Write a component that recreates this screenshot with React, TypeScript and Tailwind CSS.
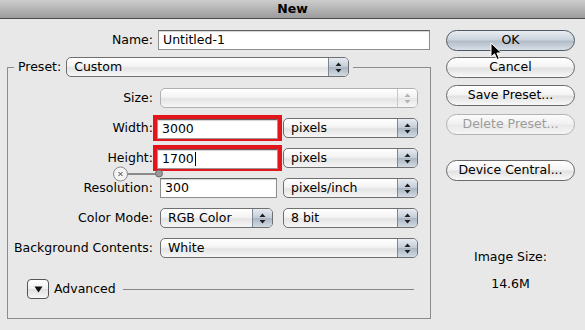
import React from "react";

const FONT = { fontFamily: '"DejaVu Sans", "Liberation Sans", sans-serif' };

function Arrows({ disabled }: { disabled?: boolean }) {
  const c = disabled ? "#b4b4b4" : "#1e1e1e";
  return (
    <svg width="7" height="11" viewBox="0 0 7 11">
      <path d="M3.5 0.5 L6.5 4 L0.5 4 Z" fill={c} />
      <path d="M3.5 10.5 L6.5 7 L0.5 7 Z" fill={c} />
    </svg>
  );
}

function Popup({
  label,
  cls,
  disabled,
}: {
  label: string;
  cls: string;
  disabled?: boolean;
}) {
  return (
    <div
      className={`flex h-[20px] shrink-0 overflow-hidden rounded-[5px] border ${
        disabled ? "border-[#b0b0b0]" : "border-[#6f6f6f]"
      } bg-[linear-gradient(to_bottom,#ffffff_0%,#f4f4f4_45%,#e4e4e4_55%,#f6f6f6_100%)] ${cls}`}
    >
      <div className="flex-1 pl-[7px] text-[12.5px] leading-[18px] text-black">{label}</div>
      <div
        className={`flex w-[20px] items-center justify-center border-l ${
          disabled
            ? "border-[#c8c8c8] bg-[linear-gradient(to_bottom,#ffffff,#f0f0f0_50%,#e6e6e6_51%,#f6f6f6)]"
            : "border-[#7d8793] bg-[linear-gradient(to_bottom,#e6ebf1_0%,#c4cdd8_48%,#aab6c3_52%,#d3dbe4_100%)]"
        }`}
      >
        <Arrows disabled={disabled} />
      </div>
    </div>
  );
}

function Field({ value, cls, caret }: { value: string; cls: string; caret?: boolean }) {
  return (
    <div
      className={`flex h-[20px] shrink-0 items-center border border-[#8e8e8e] border-t-[#5f5f5f] bg-white pl-[4px] text-[12.5px] text-black shadow-[inset_0_1px_1px_rgba(0,0,0,0.18)] ${cls}`}
    >
      {value}
      {caret && <span className="ml-[1px] inline-block h-[14px] w-[1px] bg-black" />}
    </div>
  );
}

function Btn({
  label,
  cls,
  def,
  disabled,
}: {
  label: string;
  cls: string;
  def?: boolean;
  disabled?: boolean;
}) {
  const look = def
    ? "border-[#4f5965] bg-[linear-gradient(to_bottom,#e9edf2_0%,#c9d1db_48%,#b0bbc7_52%,#d8dfe7_100%)] text-black"
    : disabled
    ? "border-[#b3b3b3] bg-[linear-gradient(to_bottom,#fbfbfb_0%,#f1f1f1_48%,#e8e8e8_52%,#f5f5f5_100%)] text-[#9c9c9c]"
    : "border-[#6a6a6a] bg-[linear-gradient(to_bottom,#ffffff_0%,#f3f3f3_48%,#e1e1e1_52%,#f8f8f8_100%)] text-black";
  return (
    <div
      className={`flex h-[21px] w-[129px] items-center justify-center rounded-full border text-[12.5px] ${look} ${cls}`}
    >
      {label}
    </div>
  );
}

function Row({ label, children }: { label: string; children: React.ReactNode }) {
  return (
    <div className="flex h-[20px] items-center">
      <div className="w-[145px] shrink-0 whitespace-nowrap text-right text-[12.5px] text-black">{label}</div>
      <div className="ml-[7px] flex items-center">{children}</div>
    </div>
  );
}

export default function App() {
  return (
    <div className="relative h-[330px] w-[585px] overflow-hidden bg-[#e8e8e8]" style={FONT}>
      {/* Title bar */}
      <div className="flex h-[19px] items-center justify-center border-b border-[#4a4a4a] bg-[linear-gradient(to_bottom,#cdcdcd,#9b9b9b)] text-[12.5px] font-bold text-black">
        New
      </div>

      <div className="flex pl-[7px]">
        {/* Left column */}
        <div className="w-[424px]">
          <div className="mt-[11px] flex h-[20px] items-center">
            <div className="w-[146px] text-right text-[12.5px] text-black">Name:</div>
            <Field value="Untitled-1" cls="ml-[5px] w-[272px]" />
          </div>

          <fieldset className="relative mt-[7px] h-[262px] w-[424px] border border-[#8c8c8c] px-0 pt-[11px]">
            <legend className="ml-[6px] flex items-center px-[4px]">
              <span className="text-[12.5px] text-black">Preset:</span>
              <Popup label="Custom" cls="ml-[5px] w-[283px]" />
            </legend>

            <div className="flex flex-col gap-[10px]">
              <Row label="Size:">
                <Popup label="" cls="w-[258px]" disabled />
              </Row>
              <Row label="Width:">
                <div className="-my-[3px] -ml-[7px] h-[26px] w-[129px] border-[4px] border-[#e3141b] bg-white">
                  <Field value="3000" cls="h-[18px] w-[121px] border-[#9a9a9a]" />
                </div>
                <Popup label="pixels" cls="ml-[1px] w-[135px]" />
              </Row>
              <Row label="Height:">
                <div className="-my-[3px] -ml-[7px] h-[26px] w-[129px] border-[4px] border-[#e3141b] bg-white">
                  <Field value="1700" cls="h-[18px] w-[121px] border-[#9a9a9a]" caret />
                </div>
                <Popup label="pixels" cls="ml-[1px] w-[135px]" />
              </Row>
              <Row label="Resolution:">
                <Field value="300" cls="w-[117px]" />
                <Popup label="pixels/inch" cls="ml-[6px] w-[135px]" />
              </Row>
              <Row label="Color Mode:">
                <Popup label="RGB Color" cls="w-[113px]" />
                <Popup label="8 bit" cls="ml-[10px] w-[135px]" />
              </Row>
              <Row label="Background Contents:">
                <Popup label="White" cls="w-[258px]" />
              </Row>
            </div>

            {/* constrain proportions link */}
            <svg
              className="absolute left-[104px] top-[88px]"
              width="54"
              height="18"
              viewBox="0 0 54 18"
            >
              <line x1="15" y1="9" x2="45" y2="9" stroke="#8a8a8a" strokeWidth="2" />
              <circle cx="47" cy="8.5" r="3.5" fill="#9a9a9a" stroke="#6a6a6a" strokeWidth="1" />
              <circle cx="8.5" cy="9" r="7" fill="#f4f4f4" stroke="#8a8a8a" strokeWidth="1" />
              <path d="M6.5 7 L10.5 11 M10.5 7 L6.5 11" stroke="#444" strokeWidth="1" />
            </svg>

            {/* Advanced */}
            <div className="mt-[21px] flex h-[20px] items-center">
              <div className="ml-[19px] flex h-[20px] w-[22px] items-center justify-center rounded-[4px] border border-[#555] bg-[linear-gradient(to_bottom,#ffffff,#f0f0f0_50%,#e0e0e0_51%,#f7f7f7)]">
                <svg width="9" height="7" viewBox="0 0 9 7">
                  <path d="M0.5 0.5 L8.5 0.5 L4.5 6.5 Z" fill="#111" />
                </svg>
              </div>
              <span className="ml-[5px] text-[12.5px] text-black">Advanced</span>
              <div className="ml-[7px] h-[1px] w-[291px] bg-[#858585]" />
            </div>
          </fieldset>
        </div>

        {/* Right column */}
        <div className="ml-[15px] flex w-[129px] flex-col">
          <Btn label="OK" def cls="mt-[11px]" />
          <Btn label="Cancel" cls="mt-[6px]" />
          <Btn label="Save Preset..." cls="mt-[7px]" />
          <Btn label="Delete Preset..." disabled cls="mt-[8px]" />
          <Btn label="Device Central..." cls="mt-[25px]" />
          <div className="mt-[67px] text-center text-[12.5px] text-black">Image Size:</div>
          <div className="mt-[8px] text-center text-[12.5px] text-black">14.6M</div>
        </div>
      </div>

      {/* Mouse cursor */}
      <svg className="absolute left-[490px] top-[42px]" width="13" height="19" viewBox="0 0 13 19">
        <path
          d="M1 1 L1 15 L4.5 11.8 L7 17.5 L9.3 16.5 L6.9 11 L11.5 11 Z"
          fill="#000"
          stroke="#fff"
          strokeWidth="1"
          strokeLinejoin="round"
        />
      </svg>
    </div>
  );
}
